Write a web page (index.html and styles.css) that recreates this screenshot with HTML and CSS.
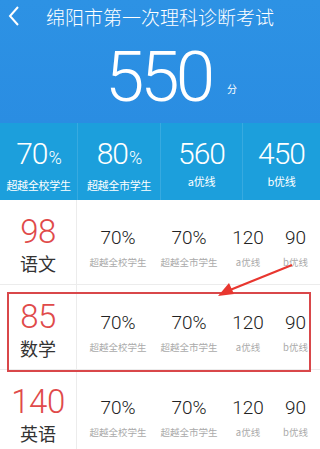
FILE: index.html
```html
<!DOCTYPE html>
<html>
<head>
<meta charset="utf-8">
<link rel="stylesheet" href="styles.css">
</head>
<body>
<div class="page">
  <header class="top">
    <div class="bar">
      <svg class="back" width="14" height="22" viewBox="0 0 14 22"><path d="M11 2 L3 11 L11 20" fill="none" stroke="#fff" stroke-width="2"/></svg>
      <div class="title">绵阳市第一次理科诊断考试</div>
    </div>
    <div class="total"><span class="big">550</span><span class="unit">分</span></div>
  </header>
  <section class="stats">
    <div class="stat"><div class="sv">70<small>%</small></div><div class="sl">超越全校学生</div></div>
    <div class="stat"><div class="sv">80<small>%</small></div><div class="sl">超越全市学生</div></div>
    <div class="stat"><div class="sv">560</div><div class="sl">a优线</div></div>
    <div class="stat"><div class="sv">450</div><div class="sl">b优线</div></div>
  </section>
  <section class="list">
    <div class="row">
      <div class="subj"><div class="score">98</div><div class="name">语文</div></div>
      <div class="cells">
        <div class="cell"><div class="cv">70%</div><div class="cl">超越全校学生</div></div>
        <div class="cell"><div class="cv">70%</div><div class="cl">超越全市学生</div></div>
        <div class="cell"><div class="cv">120</div><div class="cl">a优线</div></div>
        <div class="cell"><div class="cv">90</div><div class="cl">b优线</div></div>
      </div>
    </div>
    <div class="row">
      <div class="subj"><div class="score">85</div><div class="name">数学</div></div>
      <div class="cells">
        <div class="cell"><div class="cv">70%</div><div class="cl">超越全校学生</div></div>
        <div class="cell"><div class="cv">70%</div><div class="cl">超越全市学生</div></div>
        <div class="cell"><div class="cv">120</div><div class="cl">a优线</div></div>
        <div class="cell"><div class="cv">90</div><div class="cl">b优线</div></div>
      </div>
    </div>
    <div class="row">
      <div class="subj"><div class="score">140</div><div class="name">英语</div></div>
      <div class="cells">
        <div class="cell"><div class="cv">70%</div><div class="cl">超越全校学生</div></div>
        <div class="cell"><div class="cv">70%</div><div class="cl">超越全市学生</div></div>
        <div class="cell"><div class="cv">120</div><div class="cl">a优线</div></div>
        <div class="cell"><div class="cv">90</div><div class="cl">b优线</div></div>
      </div>
    </div>
  </section>
  <div class="highlight"></div>
  <svg class="arrow" width="320" height="449" viewBox="0 0 320 449">
    <line x1="292" y1="265" x2="230" y2="290" stroke="#e8362f" stroke-width="2.2"/>
    <polygon points="218,296 229,283 234,294" fill="#e8362f"/>
  </svg>
</div>
</body>
</html>
```
FILE: styles.css
```css
* { margin: 0; padding: 0; box-sizing: border-box; }
html, body { width: 320px; height: 449px; overflow: hidden; background: #fff; }
body { font-family: "Noto Sans CJK SC", "Noto Sans", sans-serif; }
.page { position: relative; width: 320px; height: 449px; overflow: hidden; }
.top { height: 123px; background: linear-gradient(#2d92e4, #2a8de2); color: #fff; }
.bar { height: 34px; display: flex; align-items: center; position: relative; }
.back { position: absolute; left: 7px; top: 5px; }
.title { flex: 1; text-align: center; font-size: 19px; font-weight: 300; line-height: 34px; }
.total { display: flex; justify-content: center; align-items: flex-end; height: 80px; padding-left: 22px; }
.big { font-family: Roboto, "Noto Sans", sans-serif; font-weight: 300; font-size: 71px; line-height: 71px; letter-spacing: -4px; margin-bottom: 2px; }
.unit { font-size: 10px; line-height: 12px; margin-left: 16px; margin-bottom: 19px; }
.stats { height: 77px; background: #1c9fdc; display: grid; grid-template-columns: 78px 83px 82px 77px; color: #fff; }
.stat { display: flex; flex-direction: column; align-items: center; border-right: 1px solid rgba(255,255,255,0.12); padding-top: 16px; }
.stat:last-child { border-right: none; }
.sv { font-family: Roboto, "Noto Sans", sans-serif; font-weight: 300; font-size: 30px; line-height: 30px; letter-spacing: -1px; }
.sv small { font-size: 18px; margin-left: 1px; }
.sl { font-size: 11px; line-height: 14px; margin-top: 5px; letter-spacing: -0.3px; }
.list { display: flex; flex-direction: column; }
.row { height: 85px; display: flex; border-bottom: 1px solid #ececec; }
.subj { width: 77px; border-right: 1px solid #ececec; display: flex; flex-direction: column; align-items: center; padding-top: 16px; }
.score { font-family: Roboto, "Noto Sans", sans-serif; font-weight: 300; font-size: 33px; line-height: 32px; color: #e04a4a; letter-spacing: -0.5px; }
.name { font-size: 18px; line-height: 20px; color: #333; margin-top: 5px; }
.cells { display: grid; grid-template-columns: 70px 72px 46px 49px; padding-left: 6px; padding-top: 27px; }
.cell { display: flex; flex-direction: column; align-items: center; }
.cv { font-family: Roboto, "Noto Sans", sans-serif; font-weight: 300; font-size: 19px; line-height: 22px; color: #222; }
.cl { font-size: 9.5px; line-height: 12px; color: #aaa; margin-top: 7px; white-space: nowrap; }
.highlight { position: absolute; left: 7px; top: 292px; width: 304px; height: 80px; border: 2px solid #d9474a; }
.arrow { position: absolute; left: 0; top: 0; }
```
